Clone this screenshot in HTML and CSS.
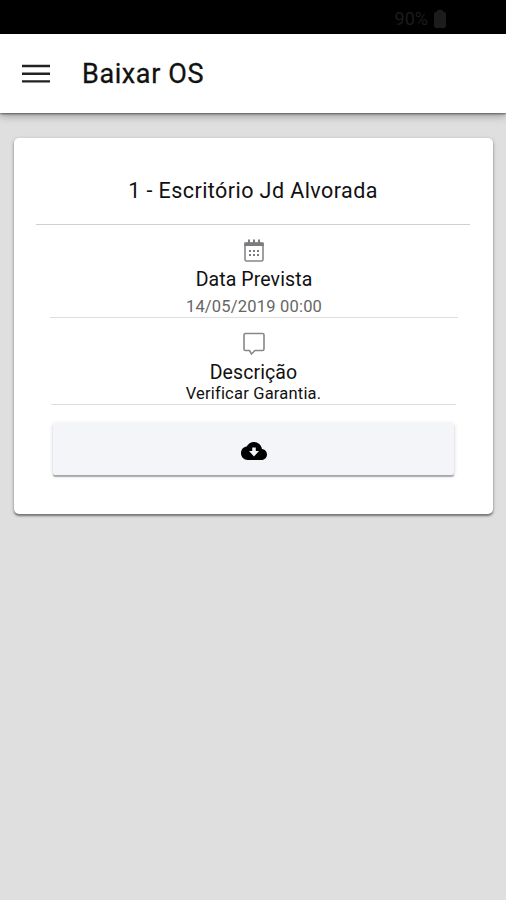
FILE: index.html
```html
<!DOCTYPE html>
<html lang="pt-BR">
<head>
    <meta charset="UTF-8">
    <meta name="viewport" content="width=device-width, initial-scale=1.0">
    <title>Baixar OS</title>
    <link rel="stylesheet" href="styles.css">
</head>
<body>
    <!-- Barra de status -->
    <div class="status-bar">
        <span>90%</span>
        <svg class="battery" viewBox="0 0 12 18"><path d="M3 2V0h6v2h1q2 0 2 2v12q0 2-2 2H2q-2 0-2-2V4q0-2 2-2z"/></svg>
    </div>

    <!-- Cabeçalho -->
    <header class="header">
        <button type="button" class="menu-button" aria-label="Menu">
            <svg viewBox="0 0 28 20"><path d="M0 2h28M0 9.700h28M0 17.400h28"/></svg>
        </button>
        <h1>Baixar OS</h1>
    </header>

    <main class="content">
        <div class="card">
            <h2 class="card-title">1 - Escritório Jd Alvorada</h2>

            <!-- Data prevista -->
            <div class="item item-date">
                <svg class="icon" viewBox="0 0 22 24">
                    <rect class="line" x="2" y="4" width="18" height="18" rx="1.5"/>
                    <path class="fill" d="M1.200 3.500h19.600v3.500H1.200zM5 0.500h2v3H5zM10 0.500h2v3h-2zM15 0.500h2v3h-2z"/>
                    <path class="fill" d="M6 11h2v2H6zM10 11h2v2h-2zM14 11h2v2h-2zM6 15h2v2H6zM10 15h2v2h-2zM14 15h2v2h-2z"/>
                </svg>
                <h3>Data Prevista</h3>
                <p>14/05/2019 00:00</p>
            </div>

            <!-- Descrição -->
            <div class="item item-description">
                <svg class="icon" viewBox="0 0 22 24">
                    <path class="line" d="M2.500 1.500h17q1.500 0 1.500 1.500v14q0 1.500-1.500 1.500H12L8.500 22l-2-3.500h-4Q1 18.500 1 17V3q0-1.500 1.500-1.500z"/>
                </svg>
                <h3>Descrição</h3>
                <p>Verificar Garantia.</p>
            </div>

            <!-- Botão para baixar -->
            <button type="button" class="download-button" aria-label="Baixar">
                <svg viewBox="0 0 26 18"><path fill-rule="evenodd" d="M21 7C20.300 3 17 0 13 0 9.800 0 7 1.800 5.700 4.500 2.500 4.800 0 7.700 0 11c0 4 3 7 6.700 7h13.800c3 0 5.500-2.500 5.500-5.500 0-3-2.300-5.300-5-5.500zM11.200 5.500h3.600V9h3.200l-5 5.500L8 9h3.200z"/></svg>
            </button>
        </div>
    </main>
</body>
</html>
```

FILE: styles.css
```css
* {
    box-sizing: border-box;
}
body {
    margin: 0;
    min-height: 100vh;
    font-family: Roboto, "Liberation Sans", sans-serif;
    background-color: #dfdfdf;
    color: #111;
}
h1, h2, h3, p {
    margin: 0;
    font-weight: 400;
}
button {
    padding: 0;
    border: none;
    background: none;
}
svg {
    display: block;
}
.status-bar {
    display: flex;
    justify-content: flex-end;
    align-items: center;
    gap: 6px;
    height: 34px;
    padding: 3px 60px 0 0;
    background-color: #000;
    color: #1c1c1c;
    font-size: 18px;
}
.battery {
    width: 12px;
    height: 18px;
    fill: #1c1c1c;
}
.header {
    display: flex;
    align-items: center;
    gap: 32px;
    height: 79px;
    padding-left: 22px;
    background-color: #fff;
    box-shadow: 0 1px 2px rgba(0, 0, 0, 0.5), 0 3px 8px rgba(0, 0, 0, 0.3);
}
.menu-button svg {
    width: 28px;
    height: 20px;
    stroke: #222;
    stroke-width: 2.4;
}
.header h1 {
    font-size: 27px;
    letter-spacing: 0.6px;
    -webkit-text-stroke: 0.3px #111;
}
.content {
    padding: 25px 13px 0 14px;
}
.card {
    height: 376px;
    padding: 0 23px 0 22px;
    background-color: #fff;
    border-radius: 5px;
    box-shadow: 0 2px 2px rgba(0, 0, 0, 0.4), 0 1px 4px rgba(0, 0, 0, 0.2);
    text-align: center;
}
.card-title {
    height: 87px;
    padding-top: 39px;
    border-bottom: 1px solid #d0d0d0;
    font-size: 21.5px;
    line-height: 28px;
    letter-spacing: 0.43px;
}
.item {
    display: flex;
    flex-direction: column;
    align-items: center;
    border-bottom: 1px solid #dedede;
}
.item-date {
    height: 93px;
    margin: 0 12px 0 14px;
    padding-top: 14px;
}
.item-description {
    height: 87px;
    margin: 0 14px 0 15px;
    padding-top: 14px;
}
.icon {
    width: 22px;
    height: 24px;
}
.icon .line {
    fill: none;
    stroke: #888;
    stroke-width: 1.6;
}
.icon .fill {
    fill: #7c7c80;
}
.item h3 {
    font-size: 19.5px;
    line-height: 24px;
    margin-top: 5px;
    letter-spacing: 0.1px;
}
.item p {
    font-size: 16.5px;
    line-height: 18px;
    letter-spacing: 0.2px;
}
.item-date p {
    margin-top: 6px;
    color: #666;
}
.download-button {
    display: flex;
    justify-content: center;
    align-items: center;
    width: 401px;
    height: 52px;
    margin: 18px 0 0 17px;
    background-color: #f3f5f9;
    border-radius: 2px;
    box-shadow: 0 2px 1px rgba(0, 0, 0, 0.28), 0 1px 4px rgba(0, 0, 0, 0.16);
}
.download-button svg {
    width: 26px;
    height: 18px;
    margin-top: 4px;
    fill: #000;
}
```
